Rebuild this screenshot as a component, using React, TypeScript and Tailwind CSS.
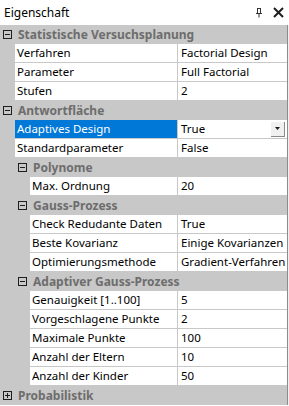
import { FC } from 'react';

type Row =
  | { kind: 'cat'; depth: number; label: string; open: boolean }
  | { kind: 'prop'; depth: number; name: string; value: string; selected?: boolean; dropdown?: boolean };

const rows: Row[] = [
  { kind: 'cat', depth: 0, label: 'Statistische Versuchsplanung', open: true },
  { kind: 'prop', depth: 1, name: 'Verfahren', value: 'Factorial Design' },
  { kind: 'prop', depth: 1, name: 'Parameter', value: 'Full Factorial' },
  { kind: 'prop', depth: 1, name: 'Stufen', value: '2' },
  { kind: 'cat', depth: 0, label: 'Antwortfläche', open: true },
  { kind: 'prop', depth: 1, name: 'Adaptives Design', value: 'True', selected: true, dropdown: true },
  { kind: 'prop', depth: 1, name: 'Standardparameter', value: 'False' },
  { kind: 'cat', depth: 1, label: 'Polynome', open: true },
  { kind: 'prop', depth: 2, name: 'Max. Ordnung', value: '20' },
  { kind: 'cat', depth: 1, label: 'Gauss-Prozess', open: true },
  { kind: 'prop', depth: 2, name: 'Check Redudante Daten', value: 'True' },
  { kind: 'prop', depth: 2, name: 'Beste Kovarianz', value: 'Einige Kovarianzen' },
  { kind: 'prop', depth: 2, name: 'Optimierungsmethode', value: 'Gradient-Verfahren' },
  { kind: 'cat', depth: 1, label: 'Adaptiver Gauss-Prozess', open: true },
  { kind: 'prop', depth: 2, name: 'Genauigkeit [1..100]', value: '5' },
  { kind: 'prop', depth: 2, name: 'Vorgeschlagene Punkte', value: '2' },
  { kind: 'prop', depth: 2, name: 'Maximale Punkte', value: '100' },
  { kind: 'prop', depth: 2, name: 'Anzahl der Eltern', value: '10' },
  { kind: 'prop', depth: 2, name: 'Anzahl der Kinder', value: '50' },
  { kind: 'cat', depth: 0, label: 'Probabilistik', open: false },
];

const indent = ['w-0', 'w-[15px]', 'w-[30px]'];

const Toggle: FC<{ open: boolean }> = ({ open }) => (
  <svg width="9" height="9" viewBox="0 0 9 9" className="block">
    <rect x="0.5" y="0.5" width="8" height="8" fill="none" stroke="#1e1e1e" />
    <path d="M2 4.5h5" stroke="#1e1e1e" />
    {!open && <path d="M4.5 2v5" stroke="#1e1e1e" />}
  </svg>
);

const App: FC = () => {
  return (
    <div
      className="w-[289px] h-[406px] bg-white overflow-hidden text-[11.5px] text-black"
      style={{ fontFamily: '"Noto Sans", "Liberation Sans", sans-serif' }}
    >
      <div className="h-[25px] flex items-center justify-between pl-1 pr-[5px]">
        <span className="text-[12px]">Eigenschaft</span>
        <div className="flex items-center gap-[11px]">
          <svg width="6" height="10" viewBox="0 0 6 10">
            <path d="M1 0.5h4M1.5 0.5v5M4.5 0.5v5M0 5.5h6M3 5.5v4" stroke="#333" fill="none" />
          </svg>
          <svg width="11" height="11" viewBox="0 0 11 11">
            <path d="M1 1l9 9M10 1l-9 9" stroke="#1e1e1e" strokeWidth="2" />
          </svg>
        </div>
      </div>
      <div className="flex">
        <div className="w-[287px] flex flex-col bg-[#c8c8c8]">
          {rows.map((r, i) =>
            r.kind === 'cat' ? (
              <div key={i} className="h-[19px] flex items-center">
                <div className={indent[r.depth]} />
                <div className="w-[15px] flex justify-start pl-[3px]">
                  <Toggle open={r.open} />
                </div>
                <span className="pl-[3px] text-[12px] font-bold text-[#6d6d6d] whitespace-nowrap">{r.label}</span>
              </div>
            ) : (
              <div key={i} className="h-[19px] flex pb-px">
                <div className={indent[r.depth]} />
                <div
                  className={`flex-1 flex items-center pl-[2px] whitespace-nowrap overflow-hidden ${
                    r.selected ? 'bg-[#0078d7] text-white' : 'bg-white'
                  }`}
                >
                  {r.name}
                </div>
                <div className="w-[109px] ml-px bg-white flex items-center pl-[3px] whitespace-nowrap overflow-hidden">
                  <span className="flex-1">{r.value}</span>
                  {r.dropdown && (
                    <div className="w-[14px] h-[15px] mr-[2px] bg-[#f0f0f0] border-r border-b border-[#8a8a8a] flex items-center justify-center">
                      <svg width="5" height="3" viewBox="0 0 5 3">
                        <path d="M0 0h5L2.5 3z" fill="#1a1a1a" />
                      </svg>
                    </div>
                  )}
                </div>
              </div>
            )
          )}
        </div>
        <div className="w-px bg-[#8c8c8c]" />
        <div className="w-px bg-[#f0f0f0]" />
      </div>
    </div>
  );
};

export default App;
